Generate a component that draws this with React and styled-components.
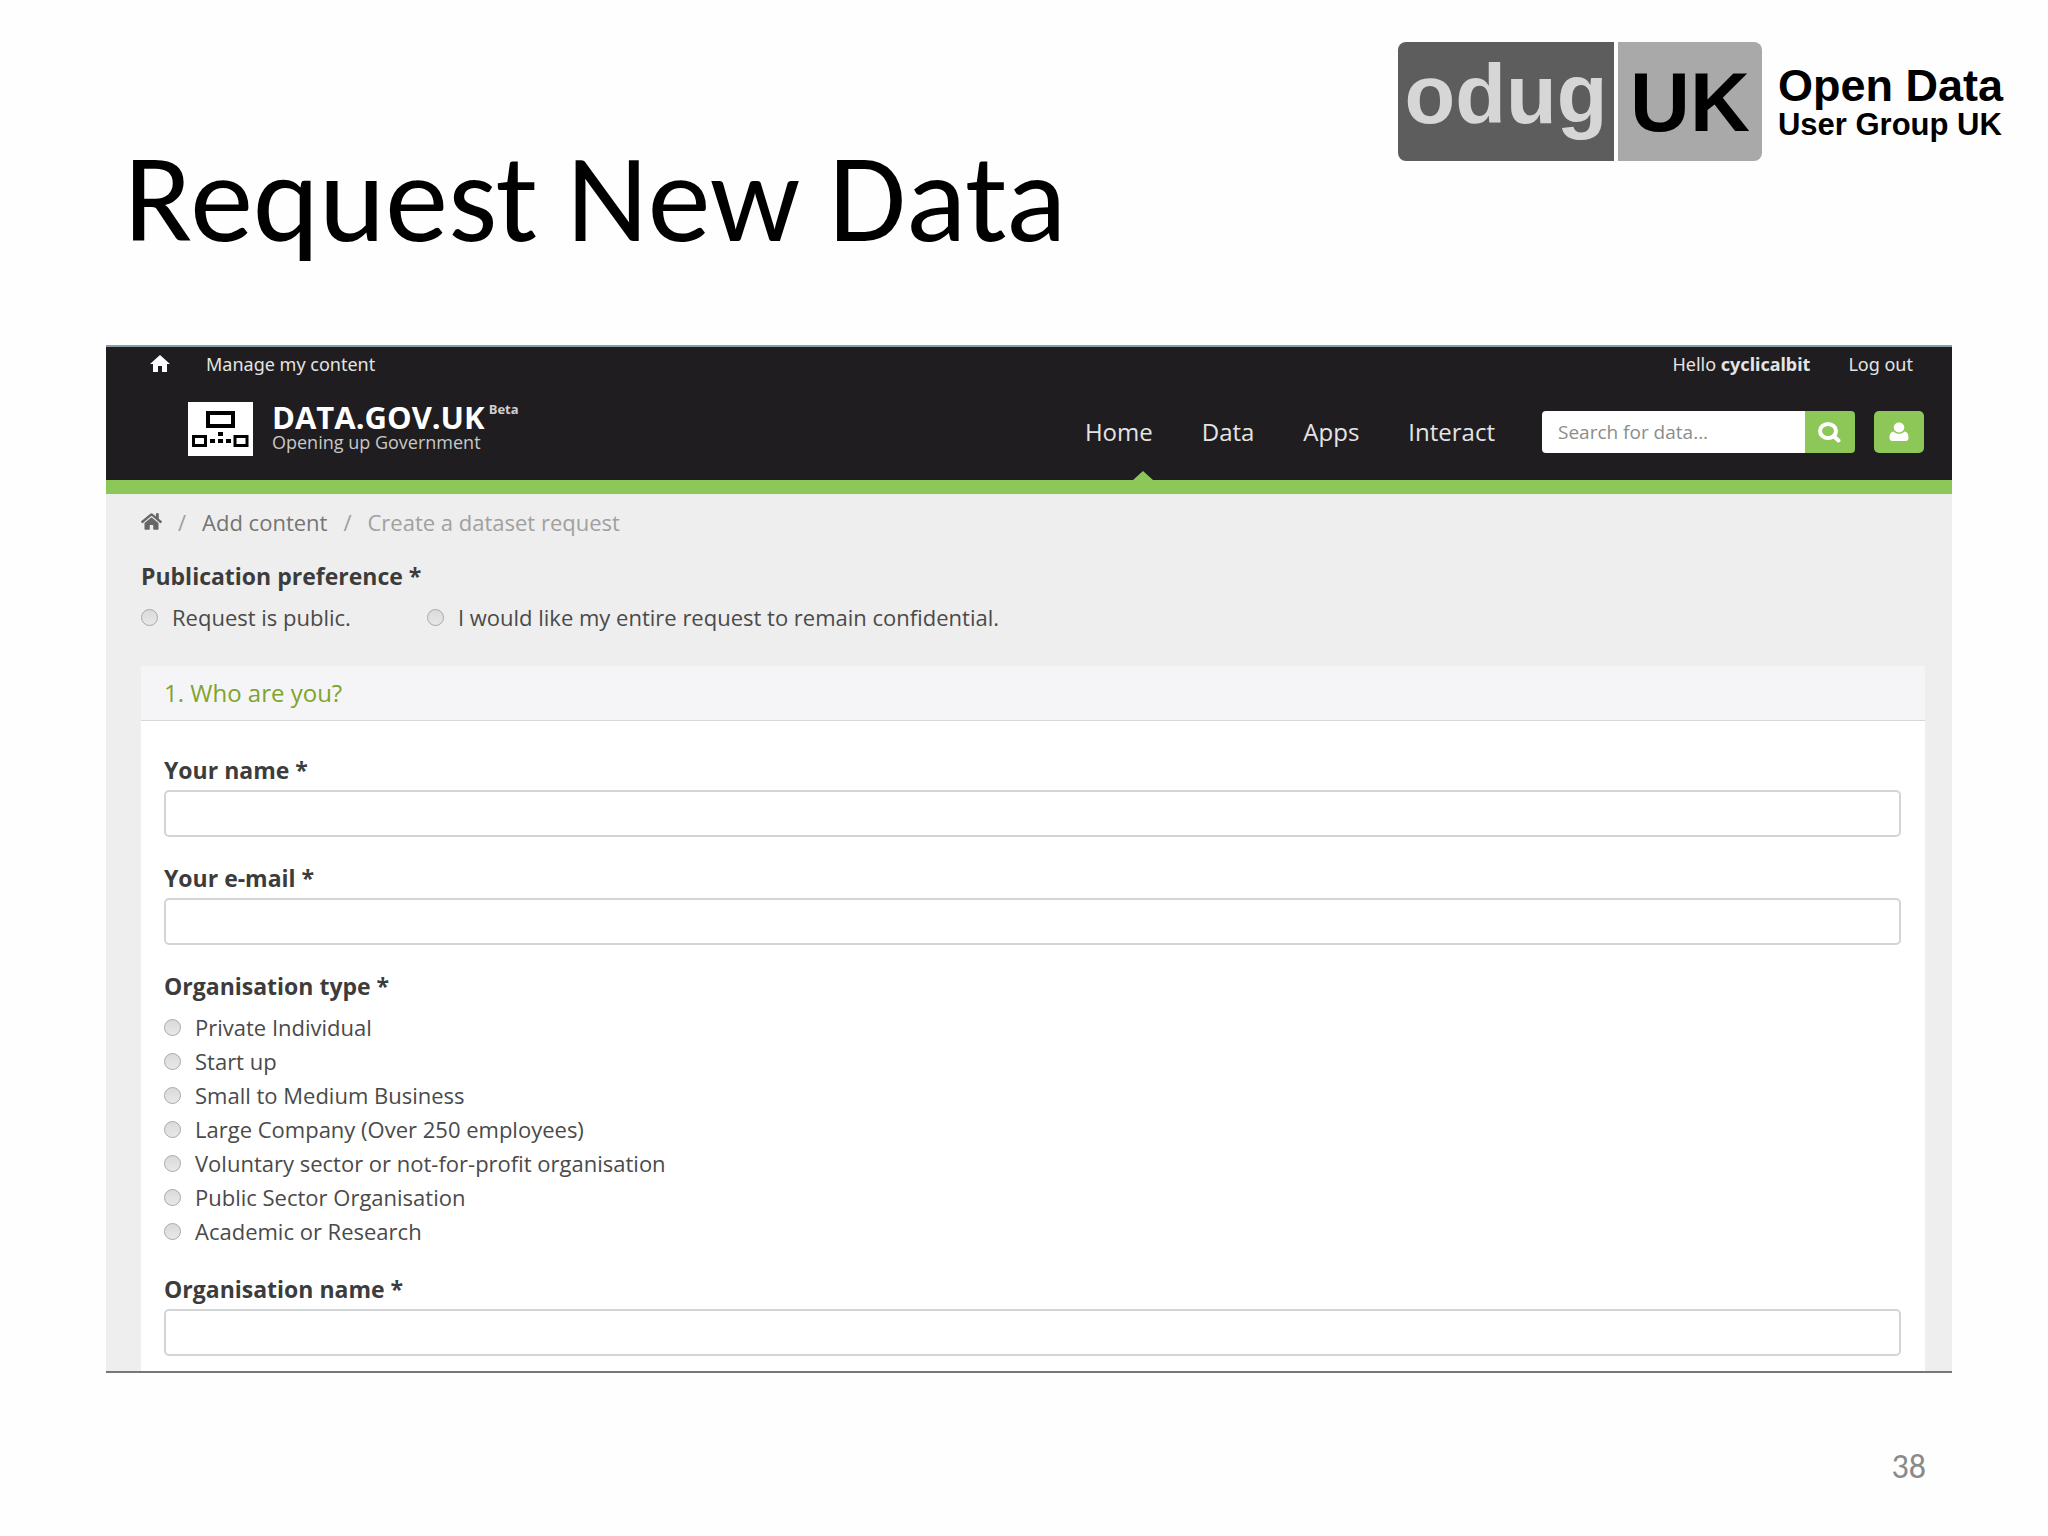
import React, { useState } from "react"
import styled, { createGlobalStyle } from "styled-components"
import { FaHome } from "react-icons/fa"
import { MdHome } from "react-icons/md"

const GlobalStyle = createGlobalStyle`
  * {
    box-sizing: border-box;
  }
  body {
    margin: 0;
    background-color: #fefefe;
    color: #4a4a4a;
    font-family: "Open Sans", sans-serif;
    font-size: 22px;
    line-height: 28px;
  }
  a {
    color: inherit;
    text-decoration: none;
  }
`
const Slide = styled.div`
  min-height: 100vh;
  display: flex;
  flex-direction: column;
`
const SlideHeader = styled.header`
  display: flex;
  justify-content: space-between;
  align-items: flex-start;
  height: 345px;
  padding: 42px 45px 0 124px;
`
const Title = styled.h1`
  margin: 0;
  padding-top: 90px;
  color: #000;
  font-family: Carlito, Lato, sans-serif;
  font-size: 126px;
  font-weight: 400;
  line-height: 132px;
`
const Odug = styled.div`
  display: flex;
  gap: 4px;
  color: #000;
  font-family: "Liberation Sans", Arial, sans-serif;
  font-weight: 700;
`
const OdugTile = styled.span`
  display: flex;
  justify-content: center;
  width: ${props => (props.$dark ? "216px" : "144px")};
  height: 119px;
  padding-top: ${props => (props.$dark ? "6px" : "14px")};
  border-radius: ${props => (props.$dark ? "8px 0 0 8px" : "0 8px 8px 0")};
  background-color: ${props => (props.$dark ? "#5d5d5d" : "#a9a9a9")};
  color: ${props => (props.$dark ? "#d6d6d6" : "#000")};
  font-size: 83px;
  line-height: 94px;
`
const OdugName = styled.div`
  display: flex;
  flex-direction: column;
  padding: 22px 0 0 12px;
  font-size: 31px;
  line-height: 34px;
  white-space: nowrap;
`
const OdugLead = styled.span`
  font-size: 45px;
  line-height: 44px;
`
const Site = styled.section`
  margin: 0 96px 0 106px;
  border-top: 2px solid #8c9ba8;
  border-bottom: 2px solid #77777b;
  background-color: #eeeeee;
`
const SiteHeader = styled.header`
  border-bottom: 14px solid #8cc757;
  background-color: #1f1d1f;
  color: #e4e4e4;
`
const TopBar = styled.div`
  display: flex;
  align-items: center;
  height: 34px;
  padding: 0 39px 0 42px;
  font-family: "Noto Sans", sans-serif;
  font-size: 18px;

  svg {
    display: block;
    color: #fff;
  }
`
const TopLink = styled.a`
  margin-left: ${props => (props.$wide ? "34px" : "38px")};
`
const Greeting = styled.span`
  margin-left: auto;
`
const MainBar = styled.div`
  display: flex;
  align-items: center;
  height: 99px;
  padding: 3px 28px 0 82px;
`
const Brand = styled.a`
  display: flex;
  align-items: center;
  gap: 19px;
  margin-right: auto;
  padding-bottom: 6px;

  svg {
    display: block;
  }
`
const BrandText = styled.span`
  display: flex;
  flex-direction: column;
  padding-bottom: 4px;
  color: #c8c8c8;
  font-size: 18px;
  line-height: 20px;
`
const BrandName = styled.span`
  display: flex;
  align-items: flex-start;
  gap: 4px;
  color: #fff;
  font-size: 31px;
  font-weight: 700;
  line-height: 30px;
`
const Beta = styled.span`
  color: #d0d0d0;
  font-size: 13px;
  line-height: 14px;
`
const Nav = styled.nav`
  display: flex;
  gap: 49px;
  margin-right: 47px;
`
const NavLink = styled.a`
  position: relative;
  font-size: 24px;
  line-height: 96px;

  &.active::after {
    content: "";
    position: absolute;
    right: 0;
    bottom: 0;
    border: 10px solid transparent;
    border-top-width: 0;
    border-bottom-color: #8cc757;
    border-bottom-width: 9px;
  }
`
const Search = styled.form`
  display: flex;
  width: 313px;
  height: 42px;
  margin-right: 19px;
`
const SearchInput = styled.input`
  flex: 1;
  min-width: 0;
  padding: 0 16px;
  border: 0;
  border-radius: 4px 0 0 4px;
  background-color: #fff;
  font-family: inherit;
  font-size: 19px;

  &::placeholder {
    color: #8c8c8c;
    opacity: 1;
  }
`
const GreenButton = styled.button`
  display: flex;
  align-items: center;
  justify-content: center;
  width: 50px;
  height: 42px;
  padding: 0;
  border: 0;
  border-radius: ${props => (props.$attached ? "0 4px 4px 0" : "5px")};
  background-color: #8cc757;
  color: #fff;
  cursor: pointer;
`
const Breadcrumb = styled.nav`
  display: flex;
  align-items: center;
  gap: 16px;
  height: 55px;
  color: #a0a0a0;

  a {
    color: #757575;
  }
  svg {
    display: block;
    color: #666;
  }
`
const Form = styled.form`
  padding: 0 27px 0 35px;
`
const Group = styled.fieldset`
  min-width: 0;
  margin: 0 0 27px;
  padding: 0;
  border: 0;
`
const Preference = styled(Group)`
  margin: 13px 0 32px;
`
const GroupLabel = styled.legend`
  padding: 0;
  color: #3c3c3c;
  font-size: 23px;
  font-weight: 700;
`
const Options = styled.div`
  display: flex;
  flex-direction: ${props => (props.$inline ? "row" : "column")};
  gap: ${props => (props.$inline ? "76px" : "0")};
  padding-top: 10px;
`
const Option = styled.label`
  display: flex;
  align-items: center;
  gap: 14px;
  line-height: 34px;
`
const Radio = styled.input`
  appearance: none;
  width: 17px;
  height: 17px;
  margin: 0;
  border: 1px solid #a8a8a8;
  border-radius: 50%;
  background: linear-gradient(#dadada, #e8e8e8);

  &:checked {
    background: radial-gradient(#444 0 4px, #e4e4e4 5px);
  }
`
const Card = styled.section`
  background-color: #fff;
`
const CardTitle = styled.h2`
  margin: 0;
  padding: 0 23px;
  border-bottom: 1px solid #d6d7da;
  background-color: #f5f5f7;
  color: #7fa42c;
  font-size: 24px;
  font-weight: 400;
  line-height: 54px;
`
const CardBody = styled.div`
  padding: 35px 24px 15px 23px;
`
const Field = styled.div`
  display: flex;
  flex-direction: column;
  gap: 6px;
  margin-bottom: ${props => (props.$last ? "0" : "27px")};
`
const FieldLabel = styled.label`
  color: #3c3c3c;
  font-size: 23px;
  font-weight: 700;
`
const TextInput = styled.input`
  width: 100%;
  height: 47px;
  padding: 0 14px;
  border: 2px solid #d3d4d7;
  border-radius: 5px;
  background-color: #fff;
  font: inherit;
`
const PageNumber = styled.footer`
  padding: 76px 122px 0 0;
  color: #8a8a8a;
  font-family: Carlito, Lato, sans-serif;
  font-size: 34px;
  line-height: 36px;
  text-align: right;
`

const navLinks = ["Home", "Data", "Apps", "Interact"]

const preferences = [
  "Request is public.",
  "I would like my entire request to remain confidential.",
]

const organisationTypes = [
  "Private Individual",
  "Start up",
  "Small to Medium Business",
  "Large Company (Over 250 employees)",
  "Voluntary sector or not-for-profit organisation",
  "Public Sector Organisation",
  "Academic or Research",
]

function BrandMark() {
  return (
    <svg width="65" height="54" viewBox="0 0 65 54" aria-hidden="true">
      <rect width="65" height="54" fill="#fff" />
      <g fill="none" stroke="#000">
        <rect x="20" y="11" width="25" height="13" strokeWidth="4" />
        <rect x="5.500" y="34.500" width="12" height="9" strokeWidth="3" />
        <rect x="47" y="34.500" width="12" height="9" strokeWidth="3" />
      </g>
      <path d="M30 30h5v4h-5zM22 37h5v4h-5zM30 37h5v4h-5zM38 37h5v4h-5z" />
    </svg>
  )
}

function SearchIcon() {
  return (
    <svg width="24" height="22" viewBox="0 0 24 22" aria-hidden="true">
      <g fill="none" stroke="currentColor" strokeWidth="4">
        <ellipse cx="10" cy="10" rx="8" ry="7" />
        <path d="M15.500 15l5 4.500" strokeLinecap="round" />
      </g>
    </svg>
  )
}

function UserIcon() {
  return (
    <svg width="20" height="20" viewBox="0 0 20 20" aria-hidden="true">
      <g fill="currentColor">
        <ellipse cx="10" cy="5.500" rx="5.300" ry="5" />
        <path d="M4.500 9.500C6 11 8 11.800 10 11.800S14 11 15.500 9.500C18.500 10 19.500 12.500 19.500 16c0 2-1 3-3 3h-13c-2 0-3-1-3-3 0-3.500 1-6 4-6.500z" />
      </g>
    </svg>
  )
}

function RadioOptions({ name, options, inline }) {
  const [selected, setSelected] = useState(null)

  return (
    <Options $inline={inline}>
      {options.map(option => (
        <Option key={option}>
          <Radio
            type="radio"
            name={name}
            value={option}
            checked={selected === option}
            onChange={() => setSelected(option)}
          />
          {option}
        </Option>
      ))}
    </Options>
  )
}

function TextField({ id, label, type = "text", last }) {
  return (
    <Field $last={last}>
      <FieldLabel htmlFor={id}>{label} *</FieldLabel>
      <TextInput id={id} name={id} type={type} />
    </Field>
  )
}

function Header() {
  return (
    <SiteHeader>
      <TopBar>
        <a href="#home" aria-label="Home">
          <MdHome size={24} />
        </a>
        <TopLink href="#manage" $wide>Manage my content</TopLink>
        <Greeting>
          Hello <b>cyclicalbit</b>
        </Greeting>
        <TopLink href="#logout">Log out</TopLink>
      </TopBar>
      <MainBar>
        <Brand href="#home">
          <BrandMark />
          <BrandText>
            <BrandName>
              DATA.GOV.UK
              <Beta>Beta</Beta>
            </BrandName>
            Opening up Government
          </BrandText>
        </Brand>
        <Nav>
          {navLinks.map(link => (
            <NavLink
              key={link}
              href={`#${link.toLowerCase()}`}
              className={link === "Home" ? "active" : ""}
            >
              {link}
            </NavLink>
          ))}
        </Nav>
        <Search onSubmit={e => e.preventDefault()}>
          <SearchInput
            type="text"
            placeholder="Search for data..."
            aria-label="Search for data"
          />
          <GreenButton type="submit" aria-label="Search" $attached>
            <SearchIcon />
          </GreenButton>
        </Search>
        <GreenButton type="button" aria-label="My account">
          <UserIcon />
        </GreenButton>
      </MainBar>
    </SiteHeader>
  )
}

function App() {
  return (
    <Slide>
      <GlobalStyle />
      <SlideHeader>
        <Title>Request New Data</Title>
        <Odug>
          <OdugTile $dark>odug</OdugTile>
          <OdugTile>UK</OdugTile>
          <OdugName>
            <OdugLead>Open Data</OdugLead>
            User Group UK
          </OdugName>
        </Odug>
      </SlideHeader>
      <Site>
        <Header />
        <Form onSubmit={e => e.preventDefault()}>
          <Breadcrumb aria-label="Breadcrumb">
            <a href="#home" aria-label="Home">
              <FaHome size={21} />
            </a>
            <span>/</span>
            <a href="#add">Add content</a>
            <span>/</span>
            <span>Create a dataset request</span>
          </Breadcrumb>
          <Preference>
            <GroupLabel>Publication preference *</GroupLabel>
            <RadioOptions name="preference" options={preferences} inline />
          </Preference>
          <Card>
            <CardTitle>1. Who are you?</CardTitle>
            <CardBody>
              <TextField id="name" label="Your name" />
              <TextField id="email" label="Your e-mail" type="email" />
              <Group>
                <GroupLabel>Organisation type *</GroupLabel>
                <RadioOptions name="organisation-type" options={organisationTypes} />
              </Group>
              <TextField id="organisation" label="Organisation name" last />
            </CardBody>
          </Card>
        </Form>
      </Site>
      <PageNumber>38</PageNumber>
    </Slide>
  )
}

export default App
